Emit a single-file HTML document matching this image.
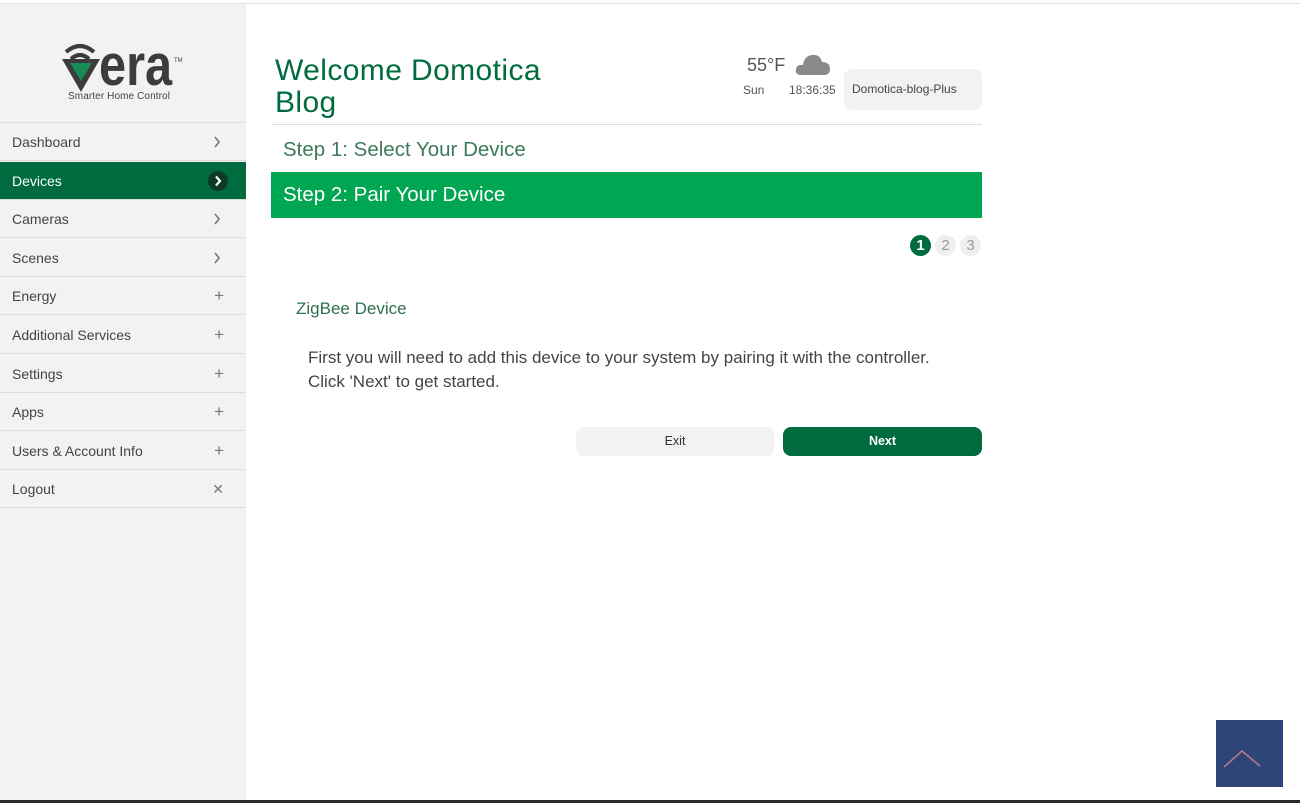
<!DOCTYPE html>
<html><head><meta charset="utf-8"><style>
*{margin:0;padding:0;box-sizing:border-box}
body{width:1300px;height:803px;overflow:hidden;background:#fff;font-family:"Liberation Sans",sans-serif;position:relative}
.a{position:absolute}
#side{left:0;top:4px;width:246px;height:796px;background:#f2f2f2}
.row{position:absolute;left:0;width:246px;height:38px;border-bottom:1px solid #dcdcdc;color:#444;font-size:14px;line-height:38px;padding-left:12px}
.row .ic{position:absolute;right:22px;top:0;color:#777;font-size:17px}
.row svg.ch{position:absolute;left:213px;top:13px}
.row.act{background:#006b3f;color:#fff}
</style></head><body>
<div class="a" style="left:0;top:3px;width:1300px;height:1px;background:#e0e0e0"></div>
<div id="side" class="a">
  <svg class="a" style="left:60px;top:34px" width="44" height="56" viewBox="0 0 44 56">
    <path d="M6 14 Q20 2 34 14" stroke="#3c3c3c" stroke-width="4" fill="none"/>
    <path d="M11 21 Q20 13 29 21" stroke="#3c3c3c" stroke-width="4" fill="none"/>
    <path d="M2 21 L40 21 L21 54 Z" fill="#3c3c3c"/>
    <path d="M10 25 L32 25 L21 43 Z" fill="#1a8a55"/>
  </svg>
  <div class="a" style="left:99px;top:33px;font-size:58px;font-weight:bold;color:#3c3c3c;line-height:58px;transform:scaleX(0.84);transform-origin:left top">era</div>
  <div class="a" style="left:174px;top:54px;font-size:6px;color:#444">TM</div>
  <div class="a" style="left:68px;top:87px;font-size:10px;color:#444;letter-spacing:0.1px">Smarter Home Control</div>
  <div class="a" style="left:0;top:118px;width:246px;height:1px;background:#dcdcdc"></div>
</div>
<div class="row" style="top:123px">Dashboard<svg class="ch" width="8" height="12"><path d="M2 1 L6 6 L2 11" stroke="#777" stroke-width="1.6" fill="none"/></svg></div>
<div class="row act" style="top:162px">Devices<span class="a" style="left:208px;top:9px;width:20px;height:20px;border-radius:50%;background:#0d3b26;line-height:0"><svg style="display:block" width="20" height="20"><path d="M8 5.5 L12 10 L8 14.5" stroke="#fff" stroke-width="2.2" fill="none"/></svg></span></div>
<div class="row" style="top:200px">Cameras<svg class="ch" width="8" height="12"><path d="M2 1 L6 6 L2 11" stroke="#777" stroke-width="1.6" fill="none"/></svg></div>
<div class="row" style="top:239px">Scenes<svg class="ch" width="8" height="12"><path d="M2 1 L6 6 L2 11" stroke="#777" stroke-width="1.6" fill="none"/></svg></div>
<div class="row" style="top:277px">Energy<span class="ic">+</span></div>
<div class="row" style="top:316px">Additional Services<span class="ic">+</span></div>
<div class="row" style="top:355px">Settings<span class="ic">+</span></div>
<div class="row" style="top:393px">Apps<span class="ic">+</span></div>
<div class="row" style="top:432px">Users &amp; Account Info<span class="ic">+</span></div>
<div class="row" style="top:470px">Logout<span class="ic" style="font-size:14px">&#10005;</span></div>

<div class="a" style="left:275px;top:55px;font-size:30px;line-height:32px;color:#006b3f;letter-spacing:0.4px">Welcome Domotica<br>Blog</div>
<div class="a" style="left:747px;top:55px;font-size:18px;color:#555">55°F</div>
<svg class="a" style="left:795px;top:50px" width="36" height="26" viewBox="0 0 36 26"><path d="M6 25 Q0 25 1 19 Q2 14 8 15 Q9 6 17 5 Q25 4 27 12 Q35 12 35 19 Q35 25 29 25 Z" fill="#8a8a8a"/></svg>
<div class="a" style="left:743px;top:83px;font-size:12px;color:#555">Sun</div>
<div class="a" style="left:789px;top:83px;font-size:12px;color:#555">18:36:35</div>
<div class="a" style="left:844px;top:69px;width:138px;height:41px;background:#f2f2f2;border-radius:8px;font-size:12px;color:#444;line-height:41px;padding-left:8px">Domotica-blog-Plus</div>
<div class="a" style="left:271px;top:124px;width:711px;height:1px;background:#ddd"></div>
<div class="a" style="left:283px;top:138px;font-size:20.5px;color:#3d7a5c">Step 1: Select Your Device</div>
<div class="a" style="left:271px;top:172px;width:711px;height:46px;background:#00a651;color:#fff;font-size:20.5px;line-height:46px;padding-left:12px">Step 2: Pair Your Device</div>
<div class="a" style="left:910px;top:235px;width:21px;height:21px;border-radius:50%;background:#006b3f;color:#fff;font-size:15px;line-height:21px;text-align:center;font-weight:bold">1</div>
<div class="a" style="left:935px;top:235px;width:21px;height:21px;border-radius:50%;background:#efefef;color:#999;font-size:15px;line-height:21px;text-align:center">2</div>
<div class="a" style="left:960px;top:235px;width:21px;height:21px;border-radius:50%;background:#efefef;color:#999;font-size:15px;line-height:21px;text-align:center">3</div>
<div class="a" style="left:296px;top:299px;font-size:17px;color:#2e7050">ZigBee Device</div>
<div class="a" style="left:308px;top:346px;font-size:17px;line-height:24px;color:#444">First you will need to add this device to your system by pairing it with the controller.<br>Click 'Next' to get started.</div>
<div class="a" style="left:576px;top:427px;width:198px;height:29px;background:#f2f2f2;border-radius:8px;font-size:12.5px;color:#333;text-align:center;line-height:29px">Exit</div>
<div class="a" style="left:783px;top:427px;width:199px;height:29px;background:#006b3f;border-radius:8px;font-size:12.5px;color:#fff;text-align:center;line-height:29px;font-weight:bold">Next</div>
<div class="a" style="left:1216px;top:720px;width:67px;height:67px;background:#2e4677">
<svg width="67" height="67"><path d="M8 47 L26 31 L44 46" stroke="#c07a8a" stroke-width="1.5" fill="none"/></svg></div>
<div class="a" style="left:0;top:800px;width:1300px;height:3px;background:#2a2a2a"></div>
</body></html>
